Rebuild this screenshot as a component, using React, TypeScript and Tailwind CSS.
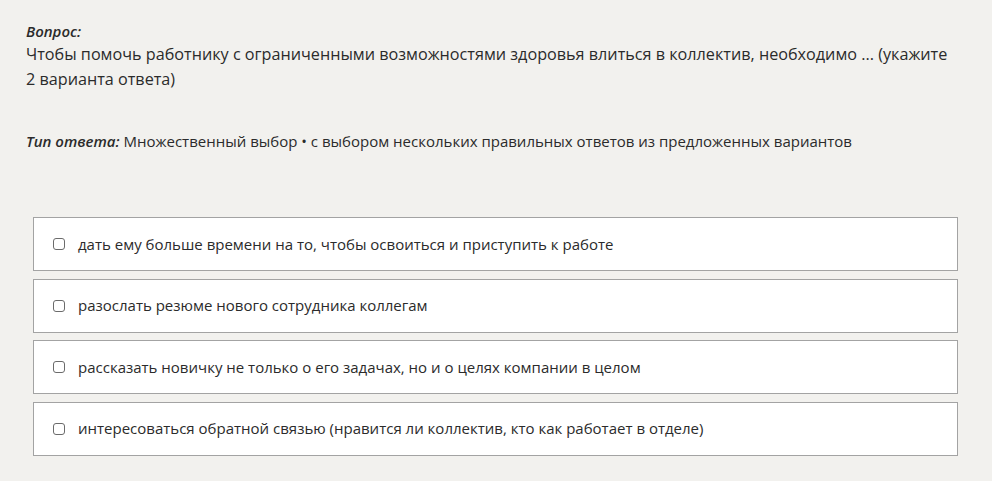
const options = [
  "дать ему больше времени на то, чтобы освоиться и приступить к работе",
  "разослать резюме нового сотрудника коллегам",
  "рассказать новичку не только о его задачах, но и о целях компании в целом",
  "интересоваться обратной связью (нравится ли коллектив, кто как работает в отделе)",
];

const App = () => {
  return (
    <div className="min-h-[481px] w-full bg-[#f2f1ee] text-[#2b2b2b] font-['Open_Sans','Noto_Sans',sans-serif] pl-[26px] pr-[20px] pt-[20px]">
      <div className="text-[15px] font-semibold italic leading-[22px]">Вопрос:</div>
      <div className="text-[16.2px] leading-[25px] pr-[22px]">
        Чтобы помочь работнику с ограниченными возможностями здоровья влиться в коллектив, необходимо ... (укажите 2 варианта ответа)
      </div>

      <div className="mt-[38px] text-[15px] leading-[22px]">
        <span className="font-semibold italic">Тип ответа:</span> Множественный выбор • с выбором нескольких правильных ответов из предложенных вариантов
      </div>

      <div className="mt-[65px] ml-[7px] mr-[14px] flex flex-col gap-[7.5px]">
        {options.map((text) => (
          <label
            key={text}
            className="flex h-[54px] items-center gap-[13px] border border-[#a3a3a3] bg-white pl-[19px] text-[15px]"
          >
            <span className="block h-[12px] w-[12px] rounded-[3px] border border-[#6b6b6b] bg-white" />
            <span>{text}</span>
          </label>
        ))}
      </div>
    </div>
  );
};

export default App;
